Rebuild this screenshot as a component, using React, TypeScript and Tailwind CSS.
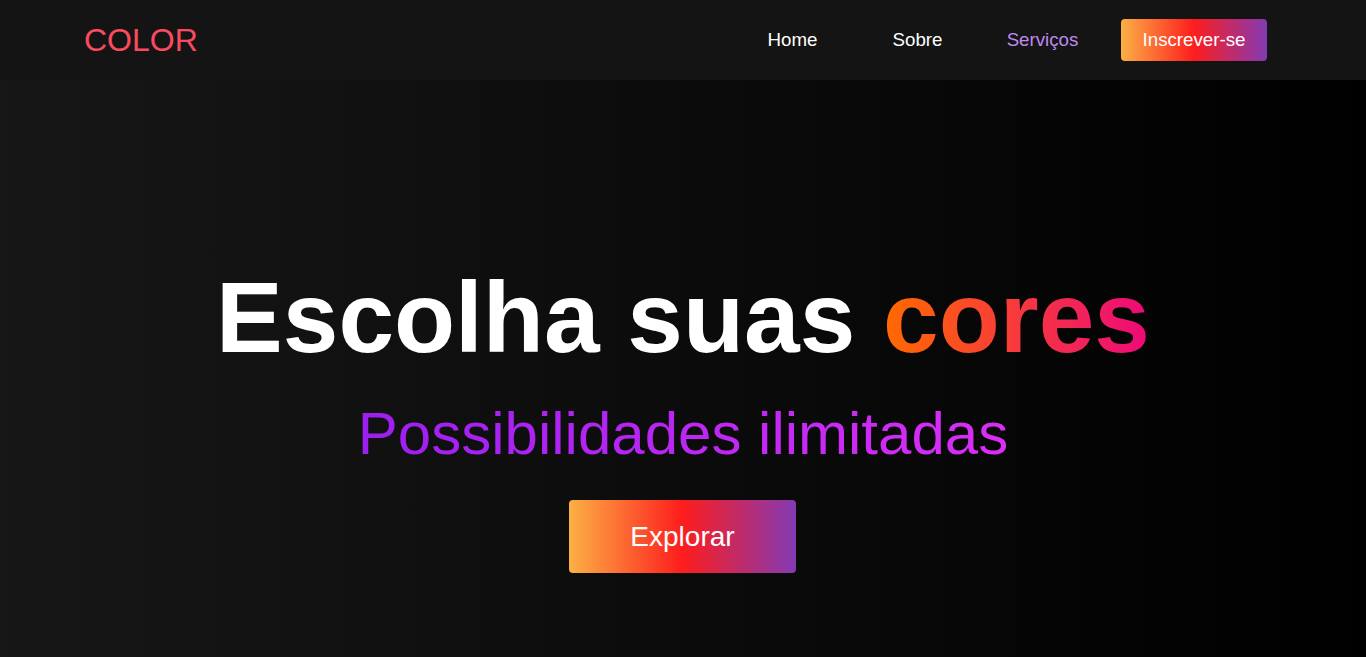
export default function App() {
    const links = ["Home", "Sobre", "Serviços"];

    return (
        <div className="min-h-screen bg-black font-['Liberation_Sans',Arial,sans-serif]">
            <header className="h-[80px] bg-[#141414] flex items-center pl-[84px] pr-[99px]">
                <div className="text-[32px] leading-none text-[#fa4a60]">COLOR</div>
                <nav className="ml-auto flex items-center">
                    {links.map((link) => (
                        <a
                            key={link}
                            href="#"
                            className={
                                link === "Serviços"
                                    ? "w-[125px] text-center text-[18.72px] text-[#bf8aee]"
                                    : "w-[125px] text-center text-[18.72px] text-white"
                            }
                        >
                            {link}
                        </a>
                    ))}
                    <button className="ml-[16px] h-[42px] w-[146px] rounded-[4px] bg-[linear-gradient(to_right,#fcb045,#fd1d1d,#833ab4)] text-[18.72px] text-white">
                        Inscrever-se
                    </button>
                </nav>
            </header>

            <section className="h-[577px] bg-[linear-gradient(to_right,#171717,#000000)] flex flex-col items-center pt-[180px]">
                <h1 className="text-[100px] leading-[115px] font-bold text-white">
                    Escolha suas{" "}
                    <span className="bg-[linear-gradient(to_right,#ff6a00,#ee0979)] bg-clip-text text-transparent">
                        cores
                    </span>
                </h1>
                <p className="mt-[24px] inline-block text-[60px] leading-[69px] bg-[linear-gradient(to_right,#9b1ff0,#da2ef6)] bg-clip-text text-transparent">
                    Possibilidades ilimitadas
                </p>
                <button className="mt-[32px] ml-[-1px] h-[73px] w-[227px] rounded-[4px] bg-[linear-gradient(to_right,#fcb045,#fd1d1d,#833ab4)] text-[28px] text-white">
                    Explorar
                </button>
            </section>
        </div>
    );
}
